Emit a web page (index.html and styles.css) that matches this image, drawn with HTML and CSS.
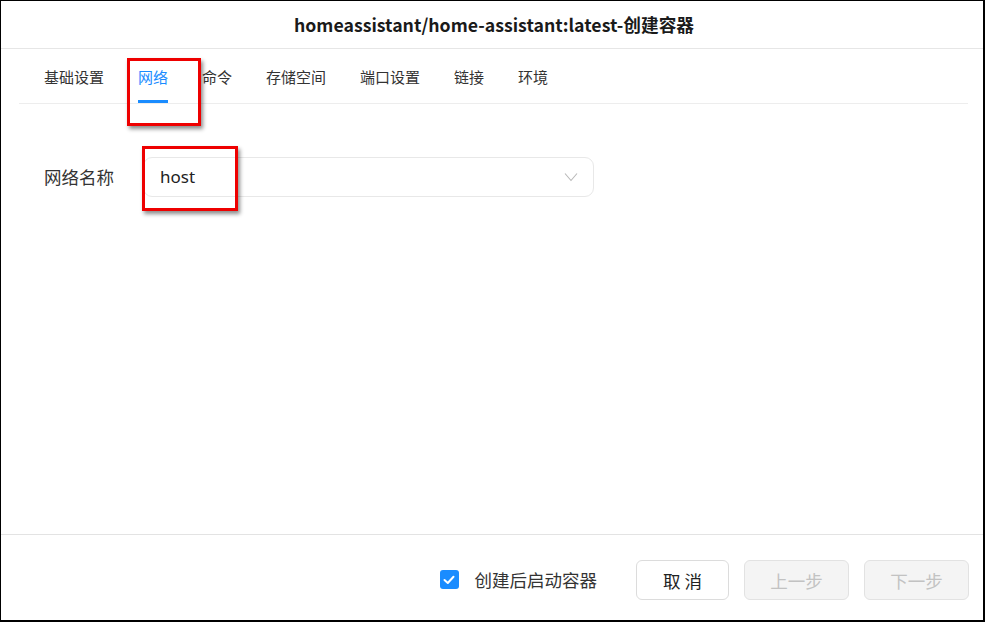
FILE: index.html
```html
<!DOCTYPE html>
<html lang="zh-CN">
<head>
<meta charset="utf-8">
<title>创建容器</title>
<link rel="stylesheet" href="styles.css">
</head>
<body>
<div class="window">
  <div class="header">homeassistant/home-assistant:latest-创建容器</div>
  <div class="tabs">
    <div class="tab">基础设置</div>
    <div class="tab active">网络</div>
    <div class="tab">命令</div>
    <div class="tab">存储空间</div>
    <div class="tab">端口设置</div>
    <div class="tab">链接</div>
    <div class="tab">环境</div>
  </div>
  <div class="content">
    <div class="row">
      <div class="label">网络名称</div>
      <div class="select">
        <span class="value">host</span>
        <svg class="chevron" width="14" height="10" viewBox="0 0 14 10"><polyline points="1,1.5 7,8.5 13,1.5" fill="none" stroke="#b8b8b8" stroke-width="1.1"/></svg>
      </div>
    </div>
  </div>
  <div class="footer">
    <label class="check">
      <span class="box"><svg width="12" height="10" viewBox="0 0 12 10"><polyline points="1.5,5 4.8,8 10.5,1.8" fill="none" stroke="#fff" stroke-width="2" stroke-linecap="round" stroke-linejoin="round"/></svg></span>
      <span class="check-text">创建后启动容器</span>
    </label>
    <div class="buttons">
      <button class="btn">取 消</button>
      <button class="btn disabled">上一步</button>
      <button class="btn disabled">下一步</button>
    </div>
  </div>
  <div class="mark mark-tab"></div>
  <div class="mark mark-select"></div>
</div>
</body>
</html>
```
FILE: styles.css
```css
* { box-sizing: border-box; }
html, body { margin: 0; padding: 0; background: #fff; }
body {
  font-family: "Noto Sans CJK SC", "Noto Sans", sans-serif;
  color: #222;
}
.window {
  position: relative;
  width: 985px;
  height: 622px;
  border-top: 1px solid #000;
  border-left: 1px solid #000;
  border-right: 2px solid #000;
  border-bottom: 2px solid #000;
  display: flex;
  flex-direction: column;
  background: #fff;
}
.header {
  height: 48px;
  border-bottom: 1px solid #e6e6e6;
  text-align: center;
  font-size: 17.7px;
  font-weight: 700;
  line-height: 47px;
  color: #1a1a1a;
  padding-left: 4px;
}
.tabs {
  margin: 0 15px 0 18px;
  height: 55px;
  border-bottom: 1px solid #ededed;
  display: flex;
  padding-left: 25px;
  gap: 34px;
}
.tab {
  position: relative;
  display: flex;
  align-items: center;
  font-size: 15px;
  color: #333;
  padding-top: 1px;
}
.tab.active { color: #1a8cff; }
.tab.active::after {
  content: "";
  position: absolute;
  left: 0;
  right: 0;
  bottom: 0;
  height: 3px;
  background: #1a8cff;
}
.content {
  flex: 1;
  padding: 53px 0 0 43px;
}
.row {
  display: flex;
  align-items: center;
}
.label {
  width: 99px;
  font-size: 17.5px;
  color: #333;
  padding-bottom: 2px;
}
.select {
  width: 451px;
  height: 40px;
  border: 1px solid #e8e8e8;
  border-radius: 9px;
  display: flex;
  align-items: center;
  justify-content: space-between;
  padding: 0 15px 0 16px;
}
.value {
  font-family: "Noto Sans", "Open Sans", sans-serif;
  font-size: 17px;
  color: #222;
  padding-bottom: 2px;
}
.chevron { display: block; }
.footer {
  height: 86px;
  border-top: 1px solid #e3e3e3;
  display: flex;
  align-items: center;
  justify-content: flex-end;
  padding: 0 14px 0 0;
}
.check {
  display: flex;
  align-items: center;
  gap: 16px;
  margin-right: 39px;
  padding-top: 4px;
}
.box {
  width: 19px;
  height: 19px;
  border-radius: 3px;
  background: #1a8cff;
  display: flex;
  align-items: center;
  justify-content: center;
}
.box svg { display: block; }
.check-text { font-size: 17.5px; color: #333; }
.buttons {
  display: flex;
  gap: 15px;
  padding-top: 5px;
}
.btn {
  height: 40px;
  width: 93px;
  border: 1px solid #dcdcdc;
  border-radius: 6px;
  background: #fff;
  font-family: "Noto Sans CJK SC", sans-serif;
  font-size: 17.5px;
  color: #222;
  padding: 0;
}
.btn.disabled {
  width: 105px;
  background: #f4f4f4;
  border-color: #e2e2e2;
  color: #c2c2c2;
}
.mark {
  position: absolute;
  border: 3px solid #ee0000;
  box-shadow: 2px 3px 4px rgba(0, 0, 0, 0.45);
}
.mark-tab {
  left: 126px;
  top: 57px;
  width: 74px;
  height: 68px;
}
.mark-select {
  left: 141px;
  top: 145px;
  width: 96px;
  height: 65px;
}
```
